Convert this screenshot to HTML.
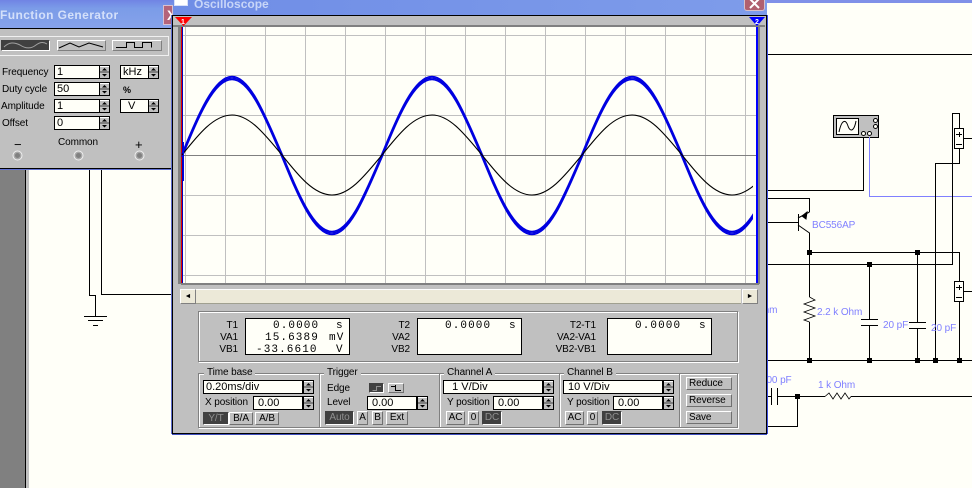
<!DOCTYPE html>
<html><head><meta charset="utf-8"><style>
html,body{margin:0;padding:0;background:#fffff8}
#r{position:relative;width:972px;height:488px;overflow:hidden;background:#fffff8;font:10px "Liberation Sans",sans-serif;letter-spacing:-.1px;color:#000}
#r div{position:absolute;box-sizing:border-box;white-space:pre}
svg{position:absolute;left:0;top:0}
.t{height:12px;line-height:12px}
.tr{height:12px;line-height:12px;text-align:right}
.i{background:#fffff8;border:1px solid #000;padding-left:4px;font-size:11px;letter-spacing:0;line-height:12px;height:14px}
.b{background:#c0c0c0;border:1px solid;border-color:#fff #707070 #707070 #fff;text-align:center;line-height:11px}
.d{background:#404040;border:1px solid;border-color:#404040 #fff #fff #404040;color:#909090;text-align:center;line-height:11px}
.g{border:1px solid #808080;box-shadow:1px 1px 0 #fff, inset 1px 1px 0 #fff}
.disp{background:#fffff8;border:1px solid #000}
.m{font:11px "Liberation Mono",monospace;letter-spacing:1.1px;height:12px;line-height:12px}
.tl{background:#c0c0c0;height:12px;line-height:12px;padding:0 3px}
</style></head><body><div id="r">

<svg width="972" height="488" fill="none" stroke="#000" stroke-width="1" shape-rendering="crispEdges">
<defs>
<symbol id="j" overflow="visible"><rect x="-2" y="-2" width="5" height="5" fill="#000" stroke="none"/></symbol>
</defs>
<rect x="0" y="0" width="25" height="488" fill="#808080" stroke="none"/>
<rect x="25" y="0" width="1" height="488" fill="#000" stroke="none"/>
<rect x="26" y="0" width="3" height="488" fill="#c0c0c0" stroke="none"/>
<rect x="767" y="0" width="205" height="3" fill="#8090e8" stroke="none"/>
<path d="M89.5 165V295.5H95.5V316M84 316.5H107M88 320.5H103M93 325.5H98M101.5 165V294.5H175"/>
<path d="M765 54.5H972"/>
<rect x="833.5" y="115.5" width="45" height="22" fill="#c0c0c0"/>
<rect x="836.5" y="118.5" width="22" height="16" fill="#fffff8"/>
<path d="M839 132C842 118 846 120 848 126C850 132 854 132 856 121" shape-rendering="auto"/>
<circle cx="863.5" cy="133.5" r="2" fill="#fffff8" shape-rendering="auto"/>
<circle cx="869.5" cy="133.5" r="2" fill="#fffff8" shape-rendering="auto"/>
<circle cx="875.5" cy="120.5" r="2" fill="#fffff8" shape-rendering="auto"/>
<circle cx="875.5" cy="126.5" r="2" fill="#fffff8" shape-rendering="auto"/>
<path d="M863.5 137V190.5H765"/>
<path d="M869.5 137V196.5H972" stroke="#8080ff"/>
<path d="M765 198.5H809.5V212M765 222.5H798M798.5 214V231"/>
<path d="M798 218L809.5 212M798 225L809.5 233V252" shape-rendering="auto"/>
<path d="M802 216L807 212L806 219Z" fill="#000" shape-rendering="auto"/>
<path d="M809.5 252.5H959.5V282M959.5 301V360M765 264.5H952.5V113.5H959.5V128M959.5 148V163.5H935.5V360"/>
<path d="M809.5 252V297"/>
<path d="M809.5 297L815 300L804 304L815 308L804 312L815 316L804 320L809.5 322" stroke-width=".8" shape-rendering="auto"/>
<path d="M809.5 322V360"/>
<path d="M869.5 264V319.5M861 319.5H878M861 325.5H878M869.5 325V360"/>
<path d="M917.5 252V322.5M909 322.5H926M909 328.5H926M917.5 328V360"/>
<path d="M765 360.5H972"/>
<rect x="954.5" y="128.5" width="9" height="20" fill="#fffff8"/>
<path d="M956 134.5H962M959.5 132V137M956 144.5H962M964 138.5H972" />
<rect x="954.5" y="281.5" width="9" height="20" fill="#fffff8"/>
<path d="M956 287.5H962M959.5 285V290M956 297.5H962M964 291.5H972"/>
<path d="M765 396.5H771.5M771.5 388V405M777.5 388V405M777.5 396.5H825"/>
<path d="M797.5 396V426.5H765"/>
<path d="M825 396.5L829 393L833 399L837 393L841 399L845 393L849 399L851 396.5" stroke-width=".8" shape-rendering="auto"/>
<path d="M851 396.5H972"/>
<use href="#j" x="809" y="252"/><use href="#j" x="917" y="252"/><use href="#j" x="869" y="264"/>
<use href="#j" x="809" y="360"/><use href="#j" x="869" y="360"/><use href="#j" x="917" y="360"/><use href="#j" x="935" y="360"/><use href="#j" x="959" y="360"/>
<use href="#j" x="797" y="396"/>
<g font-family="Liberation Sans" font-size="10" fill="#8080ff" stroke="none" shape-rendering="auto">
<text x="812" y="228">BC556AP</text>
<text x="817" y="315">2.2 k Ohm</text>
<text x="883" y="328">20 pF</text>
<text x="931" y="331">20 pF</text>
<text x="756" y="313">Ohm</text>
<text x="761" y="383">100 pF</text>
<text x="818" y="388">1 k Ohm</text>
</g>
</svg>

<!-- Function generator -->
<div style="left:0;top:0;width:173px;height:28px;background:linear-gradient(#7084e4 0,#7b9ce8 30%,#86a2ea 100%)"></div>
<div style="left:0;top:7px;width:160px;height:16px;line-height:16px;font-size:12px;font-weight:bold;color:#d4e0fa;letter-spacing:.4px">Function Generator</div>
<div style="left:163px;top:5px;width:10px;height:20px;background:#b4647a;border:1px solid #d8c0d0;color:#fff;font-size:14px;line-height:18px;font-weight:bold;overflow:hidden;letter-spacing:0;padding-left:3px">X</div>
<div style="left:0;top:28px;width:173px;height:141px;background:#c0c0c0;border-top:1px solid #000;border-bottom:1px solid #000"></div>
<div style="left:0;top:169px;width:173px;height:1px;background:#6070d0"></div>
<div style="left:-2px;top:36px;width:171px;height:20px;border:1px solid #f0f0f0;border-left:0"></div>
<div style="left:1px;top:40px;width:49px;height:11px;background:#404040;border:1px solid #fff;border-top-color:#404040;border-left-color:#404040"></div>
<div style="left:57px;top:40px;width:49px;height:11px;background:#c0c0c0;border:1px solid;border-color:#fff #808080 #808080 #fff"></div>
<div style="left:112px;top:40px;width:50px;height:11px;background:#c0c0c0;border:1px solid;border-color:#fff #808080 #808080 #fff"></div>
<svg width="172" height="56" fill="none" stroke="#000">
<path d="M4 47C9 42 14 42 20 45C26 49 31 49 36 45C40 42 44 42 47 44" stroke="#a0a0a0"/>
<path d="M59 48L70 43L79 47L89 43L103 47"/>
<path d="M116 47.5H126.5V42.5H134.5V47.5H142.5V42.5H151.5V47.5" shape-rendering="crispEdges"/>
</svg>
<div class="t" style="left:2px;top:67px">Frequency</div>
<div class="t" style="left:2px;top:84px">Duty cycle</div>
<div class="t" style="left:1px;top:101px">Amplitude</div>
<div class="t" style="left:2px;top:118px">Offset</div>
<div class="i" style="left:54px;top:65px;width:46px;padding-left:2px">1</div>
<div class="i" style="left:54px;top:82px;width:46px;padding-left:2px">50</div>
<div class="i" style="left:54px;top:99px;width:46px;padding-left:2px">1</div>
<div class="i" style="left:54px;top:116px;width:46px;padding-left:2px">0</div>
<div class="i" style="left:120px;top:65px;width:29px;padding-left:2px">kHz</div>
<div class="i" style="left:120px;top:99px;width:29px;padding-left:7px">V</div>
<div class="t" style="left:123px;top:84px;font-weight:bold;font-size:9px">%</div>
<div class="t" style="left:58px;top:137px">Common</div>
<div class="t" style="left:14px;top:139px;font-size:13px">−</div>
<div class="t" style="left:135px;top:139px;font-size:13px">+</div>

<!-- Oscilloscope -->
<div style="left:173px;top:0;width:594px;height:15px;background:linear-gradient(90deg,#6f8de6,#7e9cea)"></div>
<div style="left:174px;top:0;width:14px;height:6px;background:#fff;border:1px solid #d8e0f8;border-top:0"></div>
<div style="left:194px;top:-3px;width:120px;height:14px;line-height:14px;font-size:12px;font-weight:bold;color:#c8d6f8;letter-spacing:0">Oscilloscope</div>
<div style="left:744px;top:0;width:21px;height:11px;background:#b0606f;border:1px solid #d8c0c8;border-top:0;border-radius:0 0 3px 3px"></div>
<div style="left:172px;top:15px;width:595px;height:419px;background:#c0c0c0;border:1px solid #000;box-shadow:-1px 0 0 #6070d0,1px 0 0 #4050e0,0 1px 0 #4050c0"></div>

<svg width="972" height="488" fill="none" shape-rendering="crispEdges">
<defs>
<clipPath id="c"><rect x="181" y="27" width="572" height="256"/></clipPath>
<path id="bw" stroke="#0000e0" stroke-width="1.6" d="M182 155.500c16.300 -39.700 31.900 -77.500 50 -77.500c18.100 0 33.700 39.700 50 77.500c16.300 39.700 31.900 77.500 50 77.500c18.100 0 33.700 -39.700 50 -77.500c16.300 -39.700 31.900 -77.500 50 -77.500c18.100 0 33.700 39.700 50 77.500c16.300 39.700 31.900 77.500 50 77.500c18.100 0 33.700 -39.700 50 -77.500c16.300 -39.700 31.900 -77.500 50 -77.500c18.100 0 33.700 39.700 50 77.500c16.300 39.700 31.900 77.500 50 77.500c18.100 0 33.700 -39.700 50 -77.500"/>
</defs>
<rect x="173" y="25" width="592" height="2" fill="#808080"/>
<rect x="178" y="26" width="3" height="258" fill="#808080"/>
<rect x="757" y="26" width="3" height="258" fill="#808080"/>
<rect x="181" y="27" width="576" height="256" fill="#fffff8"/>
<rect x="181" y="283" width="578" height="2" fill="#808080"/>
<g stroke="#c0c0c0">
<path d="M185.500 27V283M225.500 27V283M265.500 27V283M305.500 27V283M345.500 27V283M385.500 27V283M425.500 27V283M465.500 27V283M505.500 27V283M545.500 27V283M585.500 27V283M625.500 27V283M665.500 27V283M705.500 27V283M745.500 27V283"/>
<path d="M181 35.500H757M181 75.500H757M181 115.500H757M181 195.500H757M181 235.500H757M181 275.500H757"/>
</g>
<path d="M181 155.500H757" stroke="#808080"/>
<path d="M181.500 27V283" stroke="#e00000" stroke-width="1"/>
<rect x="182" y="27" width="1" height="256" fill="#0000c0"/>
<rect x="756" y="27" width="2" height="256" fill="#0000ff"/>
<path d="M175 17H192L183.500 26Z" fill="#ff0000" shape-rendering="auto"/>
<text x="181" y="24" font-family="Liberation Sans" font-size="7" font-weight="bold" fill="#fff">1</text>
<path d="M749 17H765L757 26Z" fill="#0000ff" shape-rendering="auto"/>
<text x="755" y="24" font-family="Liberation Sans" font-size="7" font-weight="bold" fill="#fff">2</text>
<g clip-path="url(#c)" shape-rendering="auto">
<use href="#bw" y="-1.500"/><use href="#bw"/><use href="#bw" y="1.500"/>
<path stroke="#000" stroke-width="1.1" d="M182 155c16.300 -20.500 31.900 -40 50 -40c18.100 0 33.700 20.500 50 40c16.300 20.500 31.900 40 50 40c18.100 0 33.700 -20.500 50 -40c16.300 -20.500 31.900 -40 50 -40c18.100 0 33.700 20.500 50 40c16.300 20.500 31.900 40 50 40c18.100 0 33.700 -20.500 50 -40c16.300 -20.500 31.900 -40 50 -40c18.100 0 33.700 20.500 50 40c16.300 20.500 31.900 40 50 40c18.100 0 33.700 -20.500 50 -40"/>
</g>
<rect x="183" y="142" width="1" height="39" fill="#0000e0"/>
</svg>

<!-- scrollbar -->
<div style="left:180px;top:289px;width:16px;height:15px;background:#ece9d8;border:1px solid;border-color:#fff #808080 #808080 #fff;font-size:7px;line-height:13px;text-align:center;letter-spacing:0">◄</div>
<div style="left:196px;top:289px;width:545px;height:15px;background:#ece9d8;border-bottom:1px solid #a0a090;border-top:1px solid #fff"></div>
<div style="left:742px;top:289px;width:16px;height:15px;background:#ece9d8;border:1px solid;border-color:#fff #808080 #808080 #fff;font-size:7px;line-height:13px;text-align:center;letter-spacing:0">►</div>

<!-- readouts -->
<div class="g" style="left:198px;top:311px;width:540px;height:51px"></div>
<div class="tr" style="left:200px;top:320px;width:38px">T1</div>
<div class="tr" style="left:200px;top:332px;width:38px">VA1</div>
<div class="tr" style="left:200px;top:344px;width:38px">VB1</div>
<div class="tr" style="left:372px;top:320px;width:38px">T2</div>
<div class="tr" style="left:372px;top:332px;width:38px">VA2</div>
<div class="tr" style="left:372px;top:344px;width:38px">VB2</div>
<div class="tr" style="left:546px;top:320px;width:50px">T2-T1</div>
<div class="tr" style="left:546px;top:332px;width:50px">VA2-VA1</div>
<div class="tr" style="left:546px;top:344px;width:50px">VB2-VB1</div>
<div class="disp" style="left:245px;top:318px;width:105px;height:37px"></div>
<div class="disp" style="left:417px;top:318px;width:105px;height:37px"></div>
<div class="disp" style="left:607px;top:318px;width:105px;height:37px"></div>
<div class="m" style="left:273px;top:320px">0.0000</div>
<div class="m" style="left:336px;top:320px">s</div>
<div class="m" style="left:265px;top:332px">15.6389</div>
<div class="m" style="left:329px;top:332px">mV</div>
<div class="m" style="left:256px;top:344px">-33.6610</div>
<div class="m" style="left:336px;top:344px">V</div>
<div class="m" style="left:445px;top:320px">0.0000</div>
<div class="m" style="left:509px;top:320px">s</div>
<div class="m" style="left:635px;top:320px">0.0000</div>
<div class="m" style="left:699px;top:320px">s</div>

<!-- control groups -->
<div class="g" style="left:198px;top:373px;width:122px;height:55px"></div>
<div class="g" style="left:319px;top:373px;width:121px;height:55px"></div>
<div class="g" style="left:439px;top:373px;width:121px;height:55px"></div>
<div class="g" style="left:559px;top:373px;width:121px;height:55px"></div>
<div class="g" style="left:679px;top:373px;width:59px;height:55px"></div>
<div class="tl" style="left:204px;top:367px">Time base</div>
<div class="tl" style="left:324px;top:367px">Trigger</div>
<div class="tl" style="left:444px;top:367px">Channel A</div>
<div class="tl" style="left:564px;top:367px">Channel B</div>

<div class="i" style="left:203px;top:380px;width:100px;padding-left:2px">0.20ms/div</div>
<div class="t" style="left:205px;top:397px">X position</div>
<div class="i" style="left:253px;top:396px;width:50px">0.00</div>
<div class="d" style="left:203px;top:412px;width:26px;height:13px">Y/T</div>
<div class="b" style="left:229px;top:412px;width:24px;height:13px">B/A</div>
<div class="b" style="left:255px;top:412px;width:24px;height:13px">A/B</div>

<div class="t" style="left:327px;top:383px">Edge</div>
<div class="d" style="left:369px;top:383px;width:15px;height:10px"></div>
<div class="b" style="left:388px;top:383px;width:16px;height:10px"></div>
<svg width="972" height="488" fill="none" shape-rendering="crispEdges"><path d="M372.500 390.500H376.500V386.500H381M376.500 386V391" stroke="#909090"/><path d="M391 386.500H395.500V390.500H401M395.500 385V391" stroke="#000"/></svg>
<div class="t" style="left:327px;top:397px">Level</div>
<div class="i" style="left:367px;top:396px;width:50px">0.00</div>
<div class="d" style="left:325px;top:411px;width:29px;height:14px">Auto</div>
<div class="b" style="left:357px;top:411px;width:11px;height:14px">A</div>
<div class="b" style="left:372px;top:411px;width:11px;height:14px">B</div>
<div class="b" style="left:386px;top:411px;width:22px;height:14px">Ext</div>

<div class="i" style="left:443px;top:380px;width:100px;padding-left:2px">  1 V/Div</div>
<div class="t" style="left:447px;top:397px">Y position</div>
<div class="i" style="left:493px;top:396px;width:50px">0.00</div>
<div class="b" style="left:446px;top:411px;width:19px;height:14px">AC</div>
<div class="b" style="left:468px;top:411px;width:11px;height:14px">0</div>
<div class="d" style="left:482px;top:411px;width:20px;height:14px">DC</div>

<div class="i" style="left:563px;top:380px;width:100px;padding-left:4px">10 V/Div</div>
<div class="t" style="left:567px;top:397px">Y position</div>
<div class="i" style="left:613px;top:396px;width:50px">0.00</div>
<div class="b" style="left:565px;top:411px;width:19px;height:14px">AC</div>
<div class="b" style="left:587px;top:411px;width:11px;height:14px">0</div>
<div class="d" style="left:602px;top:411px;width:20px;height:14px">DC</div>

<div class="b" style="left:686px;top:377px;width:46px;height:13px;text-align:left;padding-left:2px">Reduce</div>
<div class="b" style="left:686px;top:394px;width:46px;height:13px;text-align:left;padding-left:2px">Reverse</div>
<div class="b" style="left:686px;top:411px;width:46px;height:13px;text-align:left;padding-left:2px">Save</div>

<!-- spinners + X glyph -->
<svg width="972" height="488" shape-rendering="crispEdges">
<defs><symbol id="s" overflow="visible">
<rect x=".5" y=".5" width="10" height="13" fill="#c0c0c0" stroke="#000"/>
<rect x="1" y="1" width="9" height="1" fill="#fff"/>
<path d="M3 5.500L5.500 3L8 5.500Z" fill="#000" shape-rendering="auto"/>
<rect x="1" y="6.500" width="9" height="1" fill="#404040"/>
<path d="M3 9L5.500 11.500L8 9Z" fill="#000" shape-rendering="auto"/>
</symbol></defs>
<use href="#s" x="99" y="65"/><use href="#s" x="99" y="82"/><use href="#s" x="99" y="99"/><use href="#s" x="99" y="116"/>
<use href="#s" x="148" y="65"/><use href="#s" x="148" y="99"/>
<use href="#s" x="303" y="380"/><use href="#s" x="303" y="396"/><use href="#s" x="417" y="396"/>
<use href="#s" x="543" y="380"/><use href="#s" x="543" y="396"/>
<use href="#s" x="663" y="380"/><use href="#s" x="663" y="396"/>
<g shape-rendering="auto">
<g fill="#a8a8a8" stroke="#f0f0f0"><circle cx="17.500" cy="155.500" r="4.500"/><circle cx="78.500" cy="155.500" r="4.500"/><circle cx="139.500" cy="155.500" r="4.500"/></g>
<g fill="#808080" stroke="none"><circle cx="17.500" cy="155.500" r="2.500"/><circle cx="78.500" cy="155.500" r="2.500"/><circle cx="139.500" cy="155.500" r="2.500"/></g>
<path d="M750 -1L759 8M759 -1L750 8" stroke="#fff" stroke-width="2" fill="none"/>
</g>
</svg>
</div></body></html>
